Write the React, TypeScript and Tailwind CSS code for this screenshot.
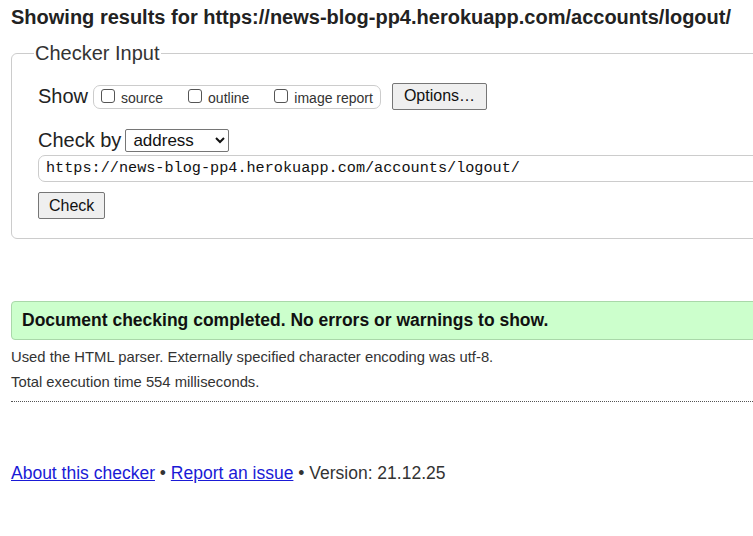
function Box() {
  return <span className="inline-block w-[14px] h-[14px] border border-[#555] rounded-[3px] bg-white mr-[6px] mt-[-5px]" />;
}

export default function App() {
  return (
    <div className="w-[753px] h-[536px] overflow-hidden bg-white text-[#222] font-['Liberation_Sans',Arial,sans-serif]">
      <div className="w-[820px] px-[11px]">
        <h2 className="pt-[5px] text-[20px] leading-[24px] font-bold text-[#222] whitespace-nowrap">
          Showing results for https://news-blog-pp4.herokuapp.com/accounts/logout/
        </h2>

        <fieldset className="mt-[12px] border border-[#ccc] rounded-[6px] px-[26px] pb-[19px]">
          <legend className="ml-[-4px] px-[1px] text-[20px] leading-[24px] text-[#333]">Checker Input</legend>

          <div className="flex items-center mt-[17px] h-[28px]">
            <span className="text-[20px] leading-[24px] text-[#222] mr-[5px]">Show</span>
            <div className="flex items-center h-[24px] mt-[2px] border border-[#ccc] rounded-[7px] pl-[7px] pr-[7px] text-[14px] text-[#333]">
              <label className="flex items-center mr-[25px] pt-[3px]">
                <Box />source
              </label>
              <label className="flex items-center mr-[25px] pt-[3px]">
                <Box />outline
              </label>
              <label className="flex items-center pt-[3px]">
                <Box />image report
              </label>
            </div>
            <button className="ml-[11px] h-[27px] px-[11px] border border-[#767676] rounded-[2px] bg-[#efefef] text-[16px] text-[#111]">
              Options…
            </button>
          </div>

          <div className="flex items-center mt-[18px] h-[24px]">
            <span className="text-[20px] leading-[24px] text-[#222] mr-[4px]">Check by</span>
            <select className="w-[104px] h-[23px] border border-[#767676] rounded-[2px] bg-white text-[17px] text-[#111] pl-[3px]">
              <option>address</option>
            </select>
          </div>

          <div className="mt-[3px] h-[27px] border border-[#ccc] rounded-l-[7px] flex items-center pl-[7px] font-['Liberation_Mono',monospace] text-[15.2px] text-[#111]">
            https://news-blog-pp4.herokuapp.com/accounts/logout/
          </div>

          <button className="mt-[10px] h-[27px] px-[10px] border border-[#767676] rounded-[2px] bg-[#efefef] text-[16px] text-[#111]">
            Check
          </button>
        </fieldset>

        <div className="mt-[62px] h-[39px] flex items-center border border-[#a9d8a9] rounded-l-[4px] bg-[#ccffcc] pl-[10px] text-[17.5px] font-bold text-[#111]">
          Document checking completed. No errors or warnings to show.
        </div>

        <p className="mt-[8px] text-[14.8px] leading-[19px] text-[#333]">
          Used the HTML parser. Externally specified character encoding was utf-8.
        </p>
        <p className="mt-[6px] text-[14.8px] leading-[19px] text-[#333]">
          Total execution time 554 milliseconds.
        </p>
        <div className="mt-[9px] border-t border-dotted border-[#555]" />

        <p className="mt-[60px] text-[17.5px] leading-[22px] text-[#333]">
          <a href="#" className="text-[#1a1ad6] underline">About this checker</a>
          {' • '}
          <a href="#" className="text-[#1a1ad6] underline">Report an issue</a>
          {' • Version: 21.12.25'}
        </p>
      </div>
    </div>
  );
}
